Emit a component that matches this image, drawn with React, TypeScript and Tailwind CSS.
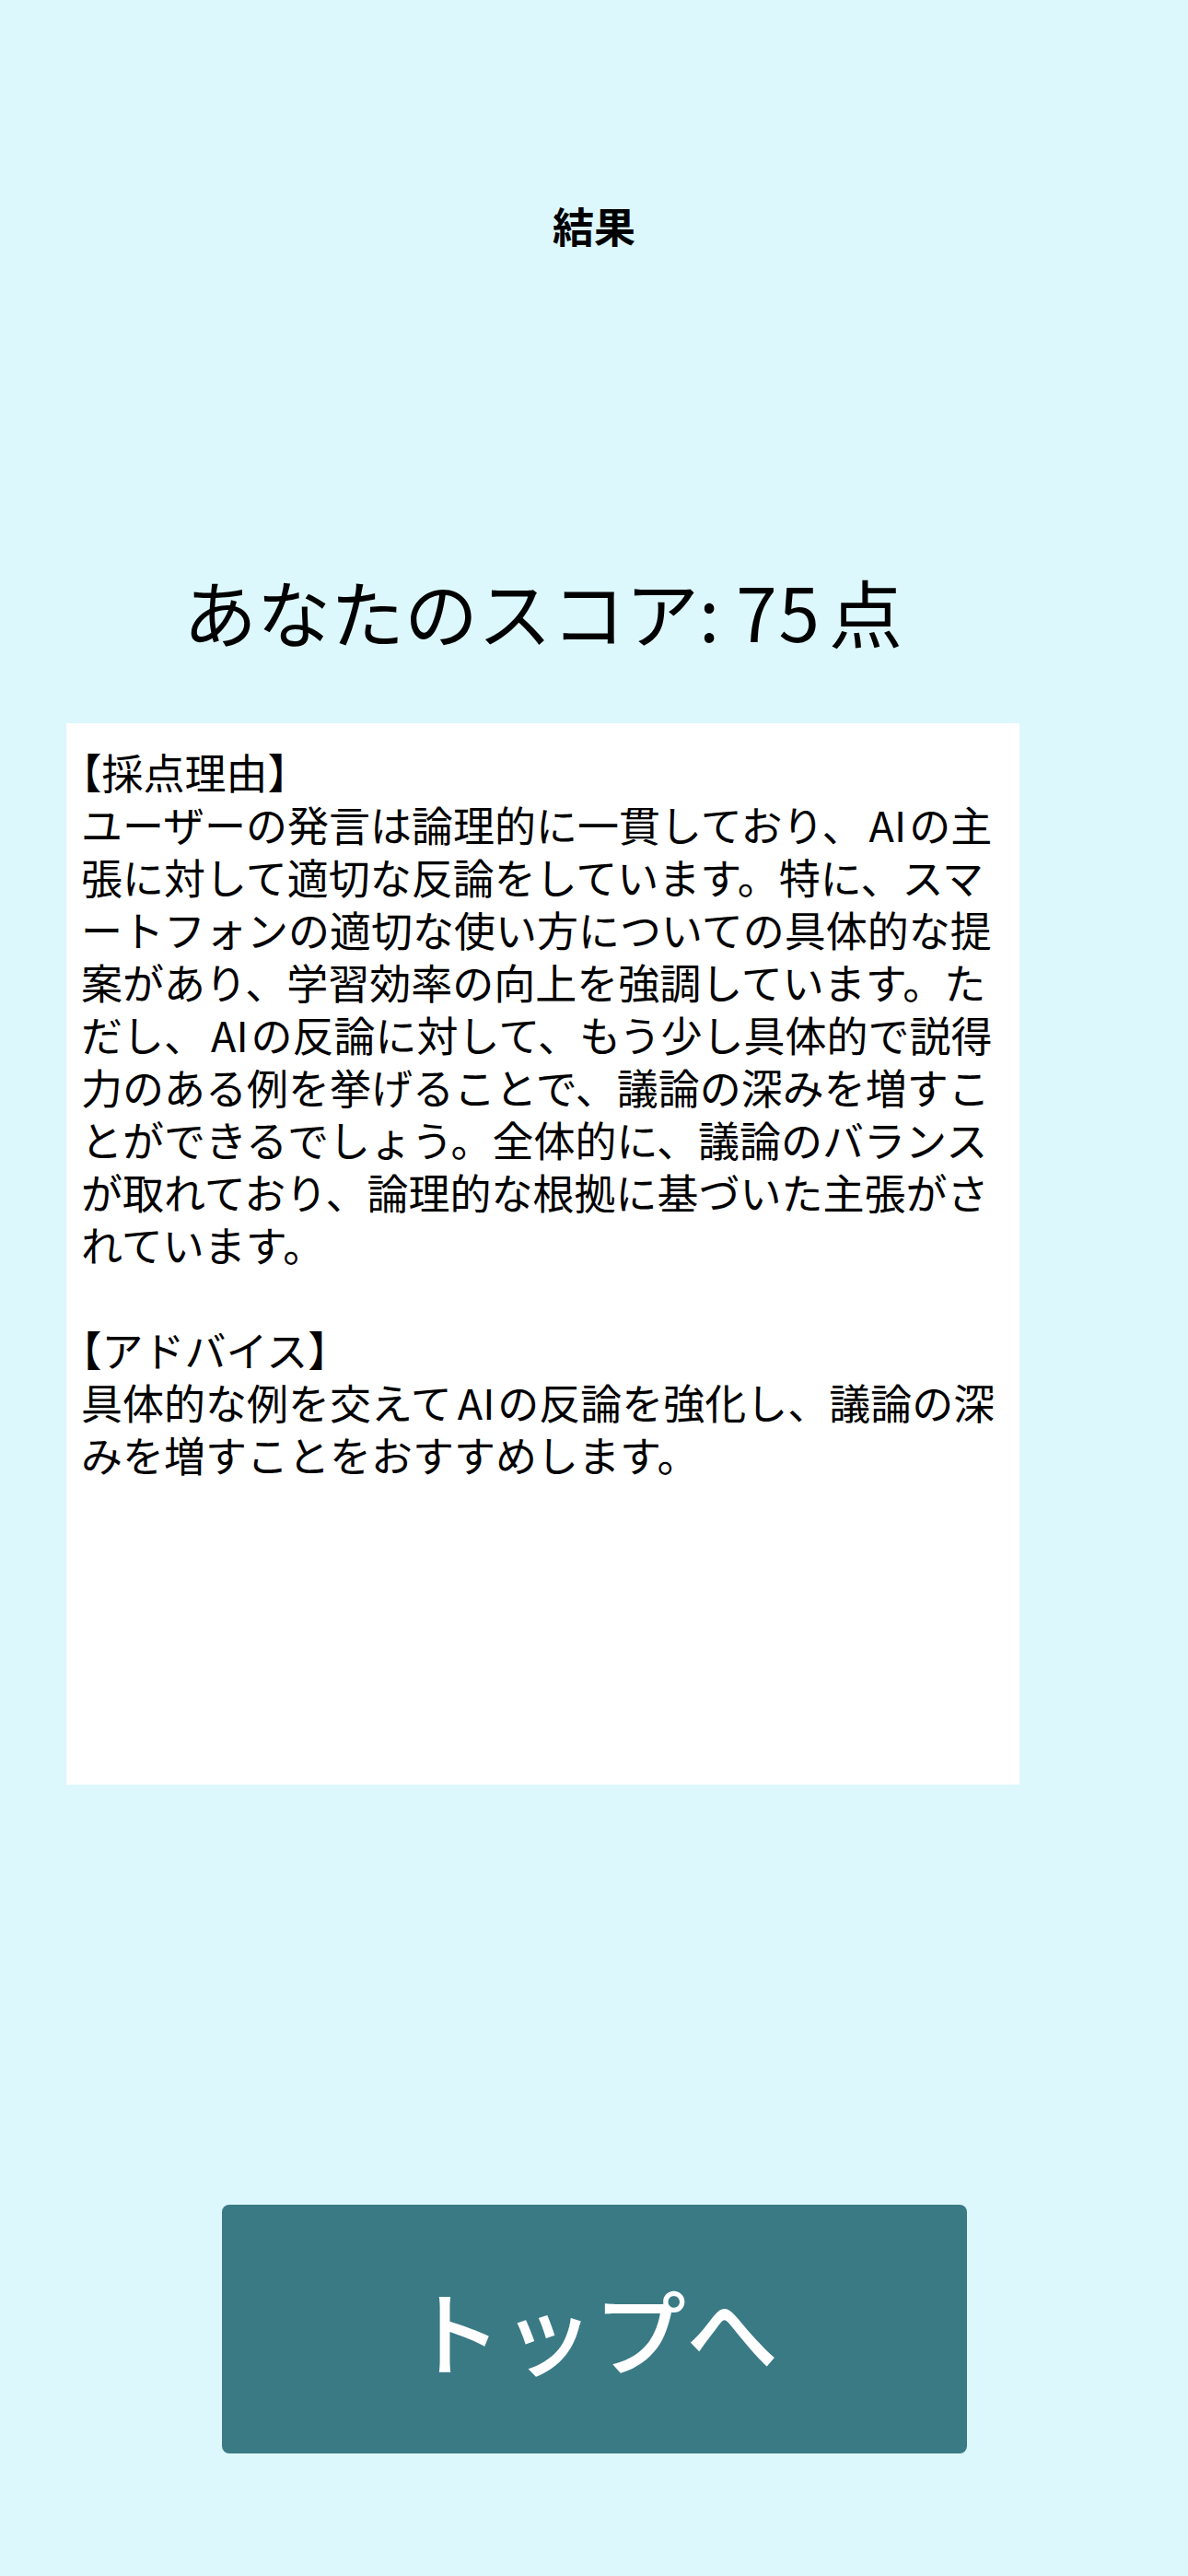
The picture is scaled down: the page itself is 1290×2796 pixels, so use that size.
import React from 'react';

const Latin = ({ children }: { children: React.ReactNode }) => (
    <span className="ml-[6px] mr-[3px]">{children}</span>
);

const Result = () => {
    const score = 75;

    return (
        <div
            lang="ja"
            className="min-h-[2796px] bg-[#ddf8fd] flex flex-col font-['Noto_Sans_CJK_JP',sans-serif] text-black"
        >
            <h1 className="pt-[218px] text-center text-[45px] leading-[54px] font-bold">結果</h1>

            <div className="ml-[72px] w-[1035px] flex flex-col">
                <p className="mt-[342px] text-center text-[80px] leading-[96px]">
                    あなたのスコア: <span className="tracking-[2px]">{score}</span>
                    <span className="ml-[8px]">点</span>
                </p>

                <div className="mt-[75px] h-[1152px] bg-white px-4 pt-[24px] text-[45px] leading-[57px] [line-break:loose]">
                    <div className="[font-feature-settings:'halt']">【採点理由】</div>
                    <div>
                        ユーザーの発言は論理的に一貫しており、<Latin>AI</Latin>の主張に対して適切な反論をしています。特に、スマートフォンの適切な使い方についての具体的な提案があり、学習効率の向上を強調しています。ただし、<Latin>AI</Latin>の反論に対して、もう少し具体的で説得力のある例を挙げることで、議論の深みを増すことができるでしょう。全体的に、議論のバランスが取れており、論理的な根拠に基づいた主張がされています。
                    </div>
                    <div className="h-[57px]" />
                    <div className="[font-feature-settings:'halt']">【アドバイス】</div>
                    <div>
                        具体的な例を交えて<Latin>AI</Latin>の反論を強化し、議論の深みを増すことをおすすめします。
                    </div>
                </div>
            </div>

            <button className="mx-auto mt-[456px] w-[809px] h-[270px] rounded-[8px] bg-[#397a85] text-white text-[100px] font-medium leading-none">
                トップへ
            </button>
        </div>
    );
};

export default function App() {
    return <Result />;
}
